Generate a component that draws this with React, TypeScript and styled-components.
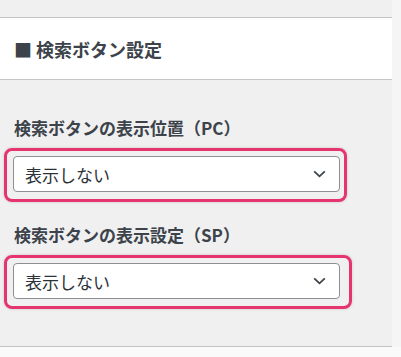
import React from 'react'
import styled, { createGlobalStyle } from 'styled-components'

const GlobalStyle = createGlobalStyle`
  html, body {
    margin: 0;
    padding: 0;
    background: #fafafa;
  }
  body {
    font-family: "Noto Sans CJK JP", "Noto Sans", sans-serif;
    color: #3c434a;
  }
`

interface FieldProps {
  label: string
  value: string
  extra?: number
}

const Field: React.FC<FieldProps> = ({ label, value, extra = 0 }) => (
  <FieldBlock>
    <Label>{label}</Label>
    <Highlight $extra={extra}>
      <Select>
        <SelectText>{value}</SelectText>
        <Chevron viewBox="0 0 13 8" aria-hidden="true">
          <path d="M1.2 1.3 L6.5 6.3 L11.8 1.3" />
        </Chevron>
      </Select>
    </Highlight>
  </FieldBlock>
)

export default function App() {
  return (
    <>
      <GlobalStyle />
      <Page>
        <Panel>
          <TopGap />
          <Header>
            <HeaderTitle>■ 検索ボタン設定</HeaderTitle>
          </Header>
          <Body>
            <Field label="検索ボタンの表示位置（PC）" value="表示しない" />
            <Field label="検索ボタンの表示設定（SP）" value="表示しない" extra={5} />
          </Body>
        </Panel>
        <Strip />
      </Page>
    </>
  )
}

const Page = styled.div`
  display: flex;
  flex-direction: row;
  width: 401px;
`

const Panel = styled.div`
  width: 392px;
  display: flex;
  flex-direction: column;
  background: #f0f0f1;
`

const Strip = styled.div`
  flex: 1;
  height: 347px;
  background: #f5f5f5;
`

const TopGap = styled.div`
  height: 17px;
`

const Header = styled.div`
  height: 61px;
  display: flex;
  align-items: center;
  padding-left: 14px;
  background: #ffffff;
  border-top: 1px solid #c3c4c7;
  border-bottom: 1px solid #c3c4c7;
`

const HeaderTitle = styled.h2`
  margin: 0;
  font-size: 18px;
  font-weight: 700;
  color: #3c434a;
  line-height: 1;
`

const Body = styled.div`
  display: flex;
  flex-direction: column;
  gap: 21px;
  padding: 36px 0 37px 0;
  border-bottom: 1px solid #c3c4c7;
`

const FieldBlock = styled.div`
  display: flex;
  flex-direction: column;
  gap: 8px;
`

const Label = styled.div`
  padding-left: 14px;
  font-size: 17px;
  font-weight: 700;
  line-height: 24px;
  color: #3c434a;
`

const Highlight = styled.div<{ $extra: number }>`
  margin-left: 4px;
  width: ${(p) => 343 + p.$extra}px;
  box-sizing: border-box;
  padding: 5px ${(p) => 4 + p.$extra}px 7px 6px;
  border: 3px solid #e6346e;
  border-radius: 8px;
  box-shadow: 0 0 3px rgba(0, 0, 0, 0.18);
`

const Select = styled.div`
  height: 36px;
  box-sizing: border-box;
  display: flex;
  align-items: center;
  justify-content: space-between;
  padding: 0 13px 0 11px;
  background: #ffffff;
  border: 1px solid #8c8f94;
  border-radius: 4px;
`

const SelectText = styled.span`
  font-size: 17px;
  color: #2c3338;
`

const Chevron = styled.svg`
  width: 13px;
  height: 8px;
  fill: none;
  stroke: #3c434a;
  stroke-width: 1.8;
`
